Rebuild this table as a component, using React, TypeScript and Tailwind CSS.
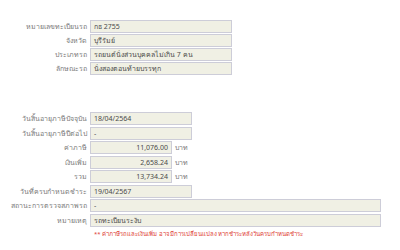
const font = { fontFamily: '"Noto Sans", "Liberation Sans", sans-serif' };

function Row({
  label,
  value,
  width,
  right,
  unit,
}: {
  label: string;
  value: string;
  width: string;
  right?: boolean;
  unit?: boolean;
}) {
  return (
    <div className="flex items-center h-[13px]">
      <div className="w-[87px] shrink-0 text-right text-[7px] leading-none text-[#7a7a7a] whitespace-nowrap">
        {label}
      </div>
      <div
        className={`ml-[3px] h-[13px] ${width} border border-[#cdcdd8] bg-[#f0f0e4] flex items-center px-[3px] text-[7px] leading-none text-[#4a4a4a] whitespace-nowrap overflow-hidden ${
          right ? "justify-end" : ""
        }`}
      >
        {value}
      </div>
      {unit && <span className="ml-[3px] text-[7px] leading-none text-[#7a7a7a]">บาท</span>}
    </div>
  );
}

export default function App() {
  return (
    <div className="w-[400px] h-[250px] bg-white overflow-hidden" style={font}>
      <div className="pt-[20px] flex flex-col gap-[1px]">
        <Row label="หมายเลขทะเบียนรถ" value="กธ 2755" width="w-[142px]" />
        <Row label="จังหวัด" value="บุรีรัมย์" width="w-[142px]" />
        <Row label="ประเภทรถ" value="รถยนต์นั่งส่วนบุคคลไม่เกิน 7 คน" width="w-[142px]" />
        <Row label="ลักษณะรถ" value="นั่งสองตอนท้ายบรรทุก" width="w-[142px]" />
      </div>
      <div className="mt-[37px] flex flex-col gap-[1.5px]">
        <Row label="วันสิ้นอายุภาษีปัจจุบัน" value="18/04/2564" width="w-[102px]" />
        <Row label="วันสิ้นอายุภาษีปีต่อไป" value="-" width="w-[102px]" />
        <Row label="ค่าภาษี" value="11,076.00" width="w-[82px]" right unit />
        <Row label="เงินเพิ่ม" value="2,658.24" width="w-[82px]" right unit />
        <Row label="รวม" value="13,734.24" width="w-[82px]" right unit />
        <Row label="วันที่ครบกำหนดชำระ" value="19/04/2567" width="w-[102px]" />
        <Row label="สถานะการตรวจสภาพรถ" value="-" width="w-[291px]" />
        <Row label="หมายเหตุ" value="รถทะเบียนระงับ" width="w-[291px]" />
      </div>
      <div className="ml-[94px] mt-[4px] text-[6px] leading-none text-[#dd3a30] whitespace-nowrap">
        ** ค่าภาษีรถและเงินเพิ่ม อาจมีการเปลี่ยนแปลง หากชำระหลังวันครบกำหนดชำระ
      </div>
    </div>
  );
}
